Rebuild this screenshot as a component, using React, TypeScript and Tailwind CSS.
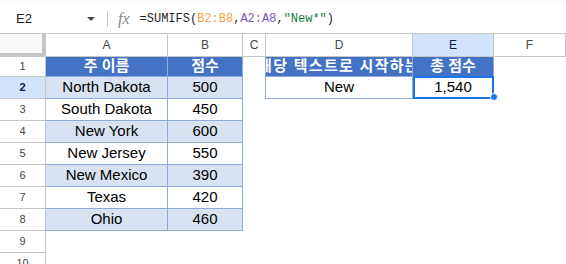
import React from "react";

const STATES: [string, string][] = [
  ["North Dakota", "500"],
  ["South Dakota", "450"],
  ["New York", "600"],
  ["New Jersey", "550"],
  ["New Mexico", "390"],
  ["Texas", "420"],
  ["Ohio", "460"],
];

const COLS = ["A", "B", "C", "D", "E", "F"];

const headCell =
  "flex items-center justify-center overflow-hidden whitespace-nowrap border-r border-b border-[#8eaadb] bg-[#4472c4] text-[15px] font-bold text-white";
const dataCell =
  "flex items-center justify-center overflow-hidden whitespace-nowrap border-r border-b border-[#8eaadb] text-[15px] text-black";

function FormulaBar() {
  return (
    <div className="flex h-[29px] items-center bg-white">
      <div className="flex w-[107px] items-center pl-[16px]">
        <span className="text-[13px] text-[#1f1f1f]">E2</span>
        <span className="ml-auto mr-[12px] h-0 w-0 border-x-[4px] border-t-[4px] border-x-transparent border-t-[#444746]" />
      </div>
      <div className="h-[16px] w-px bg-[#c4c7c5]" />
      <span className="ml-[10px] font-['Liberation_Serif',serif] text-[16px] italic leading-none text-[#80868b]">
        fx
      </span>
      <div className="ml-[10px] whitespace-nowrap font-['Liberation_Mono',monospace] text-[12px] text-[#1f1f1f]">
        =SUMIFS(<span className="text-[#f7a043]">B2:B8</span>,
        <span className="text-[#7e57c2]">A2:A8</span>,
        <span className="text-[#0b8043]">"New*"</span>)
      </div>
    </div>
  );
}

function Sheet() {
  const rows = Array.from({ length: 10 }, (_, i) => i + 1);
  return (
    <div className="grid grid-cols-[46px_122px_75px_23px_147px_81px_72px] grid-rows-[24px_20px_repeat(9,22px)] font-['Liberation_Sans','Noto_Sans_CJK_KR',sans-serif]">
      {/* column headers */}
      <div className="border-t border-r-[4px] border-b-[4px] border-[#c4c7c5] bg-[#f8f9fa]" />
      {COLS.map((c) => (
        <div
          key={c}
          className={
            c === "E"
              ? "flex items-center justify-center border-t border-r border-b border-[#c4c7c5] bg-[#d3e3fd] text-[12px] text-[#041e49]"
              : "flex items-center justify-center border-t border-r border-b border-[#c4c7c5] bg-white text-[12px] text-[#444746]"
          }
        >
          {c}
        </div>
      ))}

      {rows.map((r) => {
        const s = r >= 2 && r <= 8 ? STATES[r - 2] : null;
        const even = r % 2 === 0;
        return (
          <React.Fragment key={r}>
            <div
              className={
                r === 2
                  ? "flex items-center justify-center border-r border-b border-[#c4c7c5] bg-[#d3e3fd] text-[11px] font-bold text-[#041e49]"
                  : "flex items-center justify-center border-r border-b border-[#c4c7c5] bg-white text-[11px] text-[#444746]"
              }
            >
              {r}
            </div>

            {/* A, B */}
            {r === 1 ? (
              <>
                <div className={headCell}>주 이름</div>
                <div className={headCell}>점수</div>
              </>
            ) : s ? (
              <>
                <div className={even ? `${dataCell} bg-[#d9e2f3]` : dataCell}>{s[0]}</div>
                <div className={even ? `${dataCell} bg-[#d9e2f3]` : dataCell}>{s[1]}</div>
              </>
            ) : (
              <>
                <div />
                <div />
              </>
            )}

            {/* C */}
            <div className={r <= 2 ? "border-r border-[#8eaadb]" : ""} />

            {/* D, E */}
            {r === 1 ? (
              <>
                <div className={`${headCell} tracking-[1.3px]`}>해당 텍스트로 시작하는</div>
                <div className={headCell}>총 점수</div>
              </>
            ) : r === 2 ? (
              <>
                <div className={dataCell}>New</div>
                <div className={`${dataCell} relative overflow-visible`}>
                  1,540
                  <div className="absolute left-0 top-[-1px] right-[-1px] bottom-[-1px] border-2 border-[#1a73e8]" />
                  <div className="absolute right-[-5px] bottom-[-3px] z-10 h-[8px] w-[8px] rounded-full border border-white bg-[#1a73e8]" />
                </div>
              </>
            ) : (
              <>
                <div />
                <div />
              </>
            )}

            {/* F */}
            <div />
          </React.Fragment>
        );
      })}
    </div>
  );
}

export default function App() {
  return (
    <div className="h-[264px] w-[566px] overflow-hidden bg-white font-['Liberation_Sans',sans-serif]">
      <div className="h-[4px] bg-[#f9fbfd]" />
      <FormulaBar />
      <Sheet />
    </div>
  );
}
